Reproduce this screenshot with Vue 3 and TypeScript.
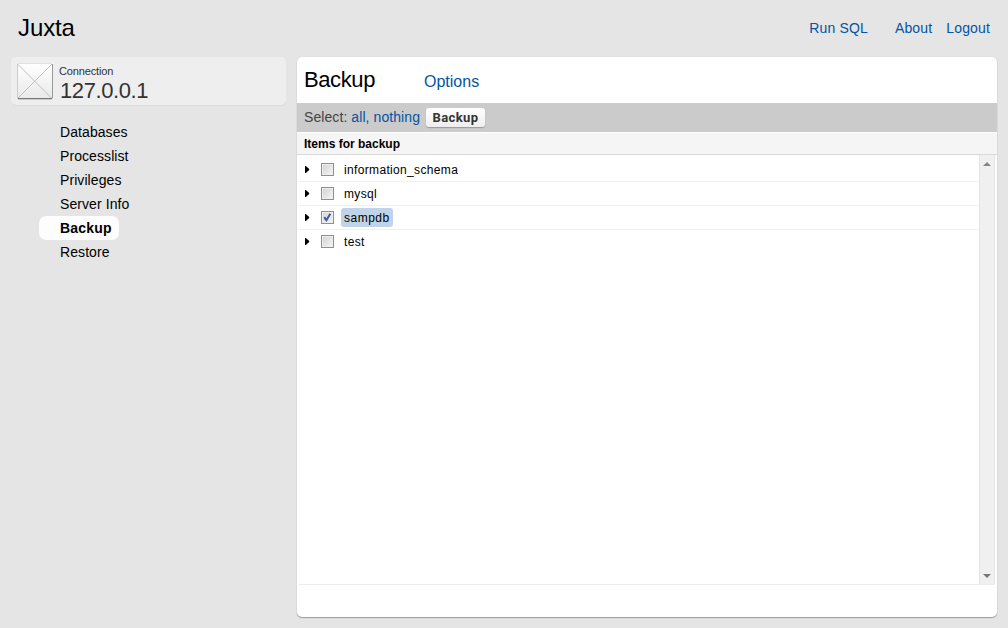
<script setup lang="ts">
import { ref } from 'vue'

interface Item {
  name: string
  checked: boolean
}

const sections = ['Databases', 'Processlist', 'Privileges', 'Server Info', 'Backup', 'Restore']
const current = ref('Backup')
const items = ref<Item[]>([
  { name: 'information_schema', checked: false },
  { name: 'mysql', checked: false },
  { name: 'sampdb', checked: true },
  { name: 'test', checked: false },
])

function selectAll(value: boolean) {
  items.value.forEach((item) => (item.checked = value))
}
</script>

<template>
  <div class="app">
    <header class="top">
      <h1 class="brand">Juxta</h1>
      <nav class="links">
        <a class="run">Run SQL</a>
        <a class="about">About</a>
        <a class="logout">Logout</a>
      </nav>
    </header>
    <div class="body">
      <aside class="side">
        <div class="connection">
          <svg class="thumb" width="36" height="37" viewBox="0 0 36 37">
            <defs>
              <linearGradient id="tile" x1="0" y1="0" x2="0" y2="1">
                <stop offset="0" stop-color="#fff" />
                <stop offset="1" stop-color="#e9e9e9" />
              </linearGradient>
            </defs>
            <rect width="36" height="36" fill="url(#tile)" />
            <path d="M.5 1 35 35.5M35 1 .5 35.5" stroke="#bbb" stroke-width=".9" fill="none" />
            <path d="M.5 1V35" stroke="#ccc" />
            <path d="M0 .5H35" stroke="#e2e2e2" />
            <path d="M35.5 1V35" stroke="#999" />
            <path d="M1 35.5H35" stroke="#777" />
            <path d="M1 36.5H35" stroke="#ccc" />
          </svg>
          <div class="where">
            <span class="kind">Connection</span>
            <span class="host">127.0.0.1</span>
          </div>
        </div>
        <ul class="menu">
          <li v-for="s in sections" :key="s">
            <a :class="{ active: s === current }" @click="current = s">{{ s }}</a>
          </li>
        </ul>
      </aside>
      <main class="panel">
        <div class="title">
          <h2>Backup</h2>
          <a>Options</a>
        </div>
        <div class="tools">
          <span class="select">Select: <a @click="selectAll(true)">all</a>, <a @click="selectAll(false)">nothing</a></span>
          <button type="button">Backup</button>
        </div>
        <div class="caption">Items for backup</div>
        <div class="list">
          <ul class="rows">
            <li v-for="item in items" :key="item.name">
              <svg class="arrow" width="5" height="7" viewBox="0 0 5 7"><path d="M0 0H.8L4.2 3V4L.8 7H0z" /></svg>
              <span class="check" @click="item.checked = !item.checked">
                <svg v-if="item.checked" width="9" height="9" viewBox="0 0 9 9">
                  <path d="M1.2 4.2 3.4 7.2 7.3 .8" fill="none" stroke="#4059a0" stroke-width="2" />
                </svg>
              </span>
              <span class="name" :class="{ chosen: item.checked }">{{ item.name }}</span>
            </li>
          </ul>
          <div class="scroll">
            <svg width="8" height="4" viewBox="0 0 8 4"><path d="M0 4 4 0 8 4z" fill="#858585" /></svg>
            <svg width="8" height="4" viewBox="0 0 8 4"><path d="M0 0H8L4 4z" fill="#777" /></svg>
          </div>
        </div>
      </main>
    </div>
  </div>
</template>

<style>
html, body { margin: 0; background: #e5e5e5; }
</style>

<style scoped>
.app {
  box-sizing: border-box;
  width: 1008px;
  height: 628px;
  overflow: hidden;
  background: #e5e5e5;
  color: #000;
  font: 14px/24px "Liberation Sans", Arial, sans-serif;
}
a { color: #0354a3; cursor: pointer; }
ul { list-style: none; margin: 0; padding: 0; }
h1, h2 { margin: 0; font-weight: normal; }
.top {
  display: flex;
  justify-content: space-between;
  height: 57px;
  padding: 0 18px;
}
.brand { font-size: 24px; line-height: 56px; letter-spacing: -.1px; }
.links { display: flex; line-height: 57px; letter-spacing: .15px; }
.about { margin-left: 27px; }
.logout { margin-left: 14px; }
.body { display: flex; padding-left: 11px; }
.side { width: 275px; margin-right: 11px; }
.connection {
  display: flex;
  height: 48px;
  border-radius: 5px;
  background: #eee;
  box-shadow: 0 1px 0 #dcdcdc;
}
.thumb { margin: 6px 6px 0; }
.where { display: flex; flex-direction: column; color: #333; }
.kind { font-size: 11px; line-height: 14px; margin-top: 7px; letter-spacing: -.15px; }
.host { padding-left: 1px; font-size: 22px; line-height: 26px; letter-spacing: -.4px; }
.menu { padding: 15px 0 0 28px; }
.menu li { height: 24px; }
.menu a {
  display: inline-block;
  padding: 0 7px 0 21px;
  border-radius: 7px;
  color: #000;
  letter-spacing: .08px;
}
.menu .active { background: #fdfdfd; font-weight: bold; letter-spacing: .2px; }
.panel {
  display: flex;
  flex-direction: column;
  width: 700px;
  height: 560px;
  overflow: hidden;
  border-radius: 5px;
  background: #fff;
  box-shadow: 0 1px 1px #999, 0 0 1px #ccc;
}
.title { display: flex; height: 46px; padding-left: 7px; }
.title h2 { width: 120px; font-size: 22px; line-height: 46px; letter-spacing: -.4px; }
.title a { font-size: 16px; line-height: 49px; }
.tools {
  display: flex;
  align-items: center;
  height: 29px;
  padding-left: 7px;
  background: #cbcbcb;
  color: #444;
}
.select { width: 122px; padding-bottom: 2px; white-space: nowrap; letter-spacing: .08px; }
button {
  width: 59px;
  height: 19px;
  padding: 0;
  border: 0;
  border-radius: 3px;
  background: linear-gradient(#fff, #eee);
  box-shadow: 0 1px 1px #999;
  color: #333;
  font: bold 13px/19px Roboto, sans-serif;
  letter-spacing: .4px;
}
.caption {
  height: 21px;
  padding-left: 7px;
  border-top: 1px solid #fff;
  border-bottom: 1px solid #d9d9d9;
  background: #f5f5f5;
  font-weight: bold;
  font-size: 12px;
  line-height: 22px;
}
.list {
  display: flex;
  height: 429px;
  margin: 0 2px;
  border-bottom: 1px solid #ececec;
}
.rows { flex: 1; padding-top: 3px; }
.rows li {
  display: flex;
  align-items: center;
  height: 23px;
  padding-left: 6px;
  border-bottom: 1px solid #f0f0f0;
  font-size: 12px;
}
.rows li:last-child { border-bottom-color: transparent; }
.arrow { margin-right: 11px; }
.check {
  display: flex;
  width: 9px;
  height: 9px;
  border: 1px solid #8e8f8f;
  background: linear-gradient(135deg, #d0d2d5, #f5f5f5);
  box-shadow: inset 0 0 0 1px #eee;
  padding: 1px;
}
.name {
  height: 19px;
  margin-left: 7px;
  padding: 0 3px;
  border-radius: 3px;
  line-height: 20px;
  letter-spacing: .34px;
}
.chosen { background: #bfd4e8; letter-spacing: .5px; }
.scroll {
  box-sizing: border-box;
  display: flex;
  flex-direction: column;
  justify-content: space-between;
  align-items: center;
  width: 16px;
  padding: 7px 0 6px;
  border-left: 1px solid #e4e4e4;
  border-right: 1px solid #e6e6e6;
  background: #f0f0f0;
}
</style>
